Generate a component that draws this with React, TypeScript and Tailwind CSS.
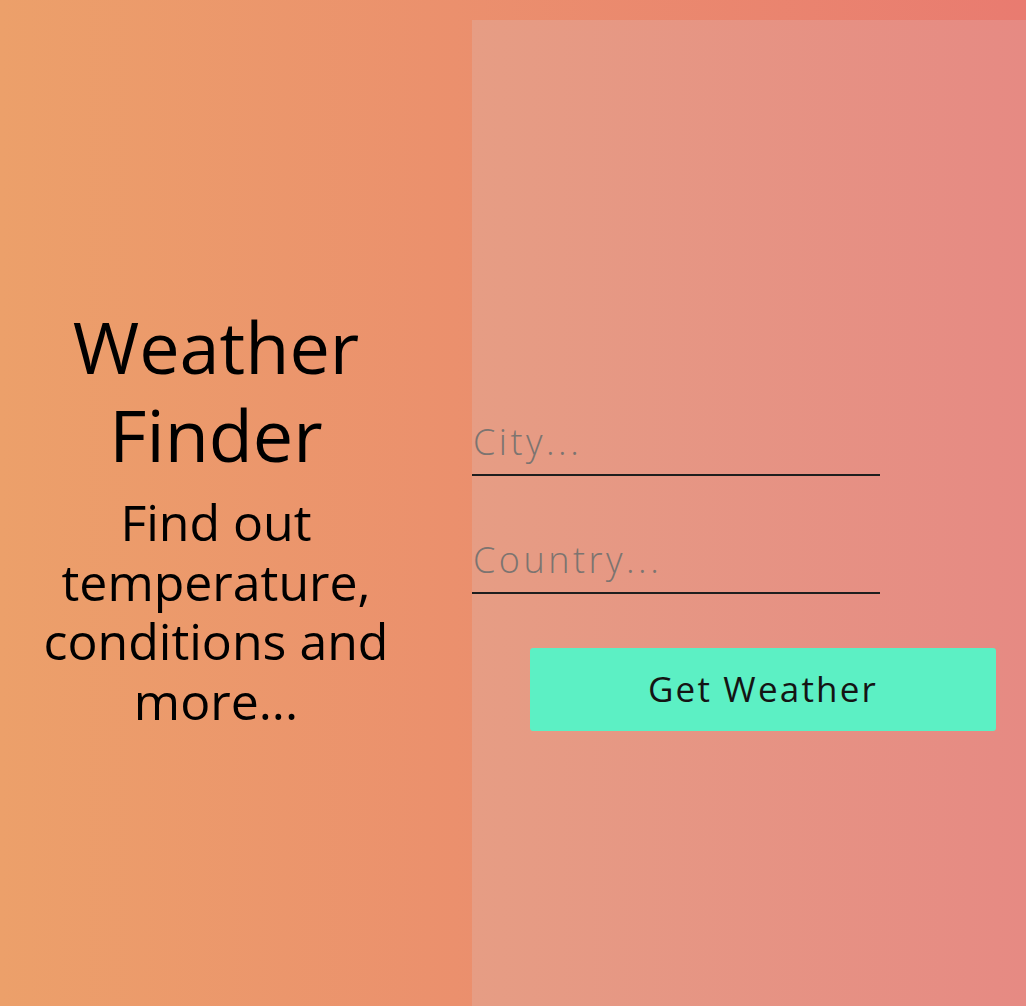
export default function App() {
  return (
    <main
      className="flex min-h-[1006px] w-full bg-gradient-to-r from-[#eca06a] to-[#e97b70] text-black"
      style={{ fontFamily: '"Open Sans", "Liberation Sans", sans-serif' }}
    >
      <section className="w-[472px] shrink-0 pt-[302px] pr-[40px] text-center">
        <h1 className="text-[72px] leading-[88px] font-normal">
          Weather
          <br />
          Finder
        </h1>
        <p className="mx-auto mt-[15px] max-w-[380px] text-[50px] leading-[59.5px]">
          Find out temperature, conditions and more...
        </p>
      </section>

      <section className="mt-[20px] flex-1 bg-gradient-to-r from-[#e69d84] to-[#e68a83] pt-[400px]">
        <form className="flex flex-col" onSubmit={(e) => e.preventDefault()}>
          <input
            type="text"
            name="city"
            placeholder="City..."
            className="h-[56px] w-[408px] border-b-2 border-[#1e1e1e] bg-transparent pb-[12px] pl-[1px] text-[36px] font-light tracking-[3.5px] outline-none placeholder:text-[#7c7470]"
          />
          <input
            type="text"
            name="country"
            placeholder="Country..."
            className="mt-[62px] h-[56px] w-[408px] border-b-2 border-[#1e1e1e] bg-transparent pb-[12px] pl-[1px] text-[36px] font-light tracking-[3.5px] outline-none placeholder:text-[#7c7470]"
          />
          <button
            type="submit"
            className="mt-[54px] ml-[58px] h-[83px] w-[466px] rounded-[3px] bg-[#5cf0c4] text-[35px] tracking-[2.2px] text-[#141414]"
          >
            Get Weather
          </button>
        </form>
      </section>
    </main>
  );
}
